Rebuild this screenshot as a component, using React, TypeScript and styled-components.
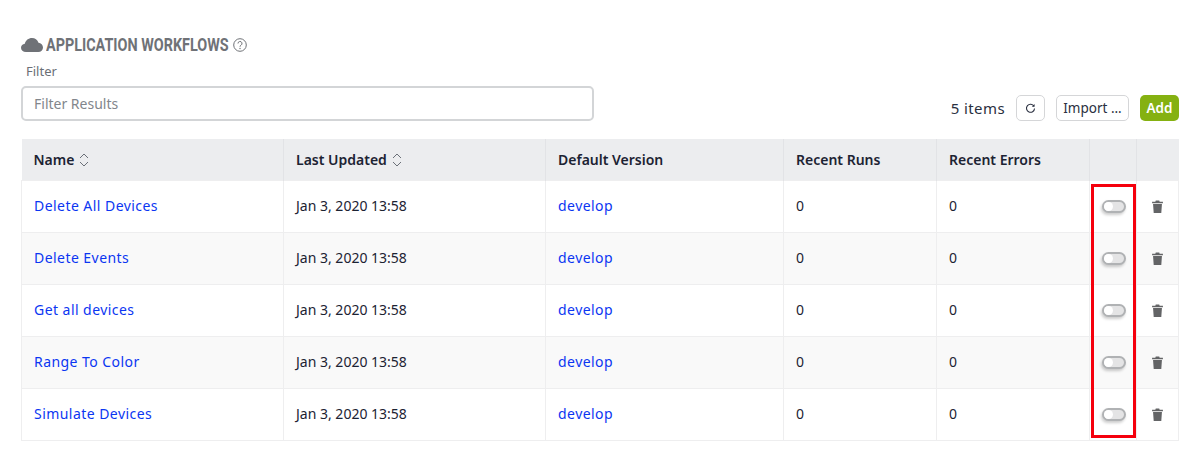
import styled, { createGlobalStyle } from 'styled-components'

const GlobalStyle = createGlobalStyle`
  html, body {
    margin: 0;
    padding: 0;
    background: #fff;
    font-family: "Noto Sans", "Open Sans", sans-serif;
    color: #1c2333;
  }
`

const workflows = ['Delete All Devices', 'Delete Events', 'Get all devices', 'Range To Color', 'Simulate Devices']

function SortIcon() {
  return (
    <SortSvg viewBox="0 0 10 14" width="10" height="14">
      <path d="M1 5l4-4 4 4M1 9l4 4 4-4" fill="none" stroke="#6b7078" strokeWidth="1" />
    </SortSvg>
  )
}

function Toggle() {
  return (
    <ToggleTrack>
      <ToggleKnob />
    </ToggleTrack>
  )
}

function TrashIcon() {
  return (
    <svg viewBox="0 0 10 12" width="11" height="13">
      <path d="M0 1.600h3L3.400.4h3.200L7 1.600h3v1.300H0zM.9 3.600h8.200l-.6 8.400h-7z" fill="#636466" />
    </svg>
  )
}

export default function App() {
  return (
    <Page>
      <GlobalStyle />
      <Title>
        <svg viewBox="0 0 22 14" width="22" height="14">
          <path
            d="M5 14C2 14 0 12 0 9.700 0 7.500 1.700 6 3.800 5.800 4.600 2.400 7.500 0 11 0c3 0 5.500 1.800 6.500 4.700C20 5 22 6.900 22 9.400 22 12 20 14 17.300 14z"
            fill="#6f7277"
          />
        </svg>
        <TitleText>APPLICATION WORKFLOWS</TitleText>
        <svg viewBox="0 0 14 14" width="14" height="14">
          <circle cx="7" cy="7" r="6.300" fill="none" stroke="#6f7277" strokeWidth="1" />
          <path d="M5 5.500a2 2 0 1 1 3 1.700c-.7.400-1 .8-1 1.500" fill="none" stroke="#6f7277" strokeWidth="1" />
          <circle cx="7" cy="10.500" r=".7" fill="#6f7277" />
        </svg>
      </Title>
      <Toolbar>
        <FilterField>
          <FilterLabel>Filter</FilterLabel>
          <FilterInput placeholder="Filter Results" />
        </FilterField>
        <Actions>
          <ItemCount>5 items</ItemCount>
          <IconButton aria-label="Refresh">
            <svg viewBox="0 0 12 12" width="11" height="11">
              <path d="M9.800 3.500A4.400 4.400 0 1 0 10.400 6" fill="none" stroke="#2a3040" strokeWidth="1.200" />
              <path d="M10.400 1v3H7.400z" fill="#2a3040" />
            </svg>
          </IconButton>
          <OutlineButton>Import ...</OutlineButton>
          <AddButton>Add</AddButton>
        </Actions>
      </Toolbar>
      <TableWrap>
        <Table>
          <colgroup>
            <col width="262" />
            <col width="262" />
            <col width="238" />
            <col width="153" />
            <col width="153" />
            <col width="47" />
            <col width="42" />
          </colgroup>
          <thead>
            <tr>
              <Th>
                Name <SortIcon />
              </Th>
              <Th>
                Last Updated <SortIcon />
              </Th>
              <Th>Default Version</Th>
              <Th>Recent Runs</Th>
              <Th>Recent Errors</Th>
              <Th />
              <Th />
            </tr>
          </thead>
          <tbody>
            {workflows.map((name) => (
              <Row key={name}>
                <Td>
                  <Link href="#">{name}</Link>
                </Td>
                <Td>Jan 3, 2020 13:58</Td>
                <Td>
                  <Link href="#">develop</Link>
                </Td>
                <Td>0</Td>
                <Td>0</Td>
                <ToggleCell>
                  <Toggle />
                </ToggleCell>
                <IconCell>
                  <TrashIcon />
                </IconCell>
              </Row>
            ))}
          </tbody>
        </Table>
        <Highlight />
      </TableWrap>
    </Page>
  )
}

const Page = styled.div`
  width: 1200px;
  height: 458px;
  box-sizing: border-box;
  padding: 35px 21px 0;
  overflow: hidden;
`

const Title = styled.div`
  display: flex;
  align-items: center;
  height: 20px;
  gap: 3px;
  color: #6f7277;
`

const TitleText = styled.h2`
  margin: 0 1px 0 0;
  width: 183px;
  font-family: "Roboto", sans-serif;
  font-size: 19px;
  font-weight: 700;
  line-height: 20px;
  white-space: nowrap;
  transform: scaleX(0.757);
  transform-origin: left center;
`

const Toolbar = styled.div`
  display: flex;
  justify-content: space-between;
  align-items: flex-end;
  margin-top: 6px;
  height: 66px;
  width: 1158px;
`

const FilterField = styled.label`
  display: flex;
  flex-direction: column;
  width: 573px;
  margin-bottom: 6px;
`

const FilterLabel = styled.span`
  font-size: 13px;
  line-height: 16px;
  color: #6b6f76;
  margin: 1px 0 7px 5px;
`

const FilterInput = styled.input`
  box-sizing: border-box;
  width: 100%;
  height: 35px;
  padding: 0 11px;
  border: 2px solid #d3d5d7;
  border-radius: 5px;
  background: #fff;
  font-family: inherit;
  font-size: 14px;
  outline: none;

  &::placeholder {
    color: #82868c;
    opacity: 1;
  }
`

const Actions = styled.div`
  display: flex;
  align-items: center;
  margin-bottom: 6px;
`

const ItemCount = styled.span`
  font-size: 15px;
  letter-spacing: 0.4px;
  margin-right: 11px;
  color: #2a3040;
`

const OutlineButton = styled.button`
  box-sizing: border-box;
  height: 26px;
  width: 73px;
  padding: 0;
  margin-left: 11px;
  border: 1.500px solid #d5d6d8;
  border-radius: 5px;
  background: #fff;
  color: #2a3040;
  font-family: inherit;
  font-size: 13.500px;
`

const IconButton = styled(OutlineButton)`
  display: flex;
  align-items: center;
  justify-content: center;
  width: 29px;
  margin-left: 0;
`

const AddButton = styled.button`
  box-sizing: border-box;
  height: 26px;
  width: 39px;
  padding: 0;
  margin-left: 11px;
  border: none;
  border-radius: 5px;
  background: #85b111;
  color: #fff;
  font-family: inherit;
  font-size: 13.500px;
  font-weight: 600;
`

const TableWrap = styled.div`
  position: relative;
  width: 1158px;
  margin-top: 12px;
`

const Table = styled.table`
  width: 1158px;
  table-layout: fixed;
  border-collapse: collapse;
  font-size: 14px;
`

const Th = styled.th`
  height: 41px;
  box-sizing: border-box;
  padding: 0 12px;
  background: #ecedef;
  border-left: 1px solid #e2e3e6;
  text-align: left;
  font-size: 14px;
  font-weight: 600;
  color: #1c2333;
  white-space: nowrap;

  &:first-child {
    border-left: none;
  }
`

const SortSvg = styled.svg`
  vertical-align: -2px;
  margin-left: 1px;
`

const Row = styled.tr`
  &:nth-child(even) td {
    background: #f9f9f9;
  }
`

const Td = styled.td`
  height: 52px;
  box-sizing: border-box;
  padding: 0 12px 2px;
  border: 1px solid #eeeeef;
  background: #fff;
  white-space: nowrap;
  color: #1c2333;
`

const IconCell = styled(Td)`
  padding: 0;
  text-align: center;
  line-height: 0;
`

const ToggleCell = styled(IconCell)`
  padding-left: 2px;
`

const Link = styled.a`
  color: #0b36f2;
  text-decoration: none;
  letter-spacing: 0.45px;
`

const ToggleTrack = styled.span`
  position: relative;
  display: inline-block;
  box-sizing: border-box;
  width: 24px;
  height: 13px;
  border: 2px solid #b0b2b4;
  border-radius: 7px;
  background: #e4e4e5;
  box-shadow: -1px 2px 3px rgba(0, 0, 0, 0.2);
`

const ToggleKnob = styled.span`
  position: absolute;
  left: 0;
  top: 0;
  width: 9px;
  height: 9px;
  border-radius: 50%;
  background: #fff;
`

const Highlight = styled.div`
  position: absolute;
  left: 1070px;
  top: 45px;
  width: 45px;
  height: 254px;
  box-sizing: border-box;
  border: 3px solid #f5000d;
  pointer-events: none;
`
